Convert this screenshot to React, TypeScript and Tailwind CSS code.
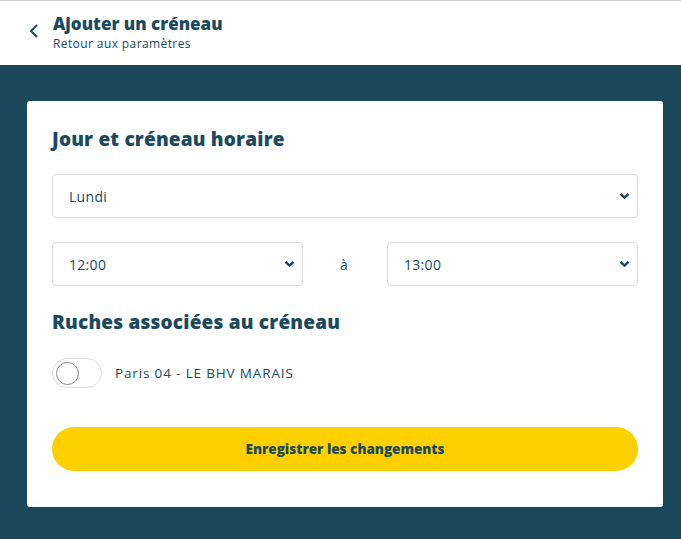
import React from "react";

const Chevron = () => (
  <svg width="11" height="8" viewBox="0 0 11 8" className="absolute right-[3px] top-1/2 -translate-y-1/2 pointer-events-none">
    <path d="M1.5 1.8 L5.5 5.6 L9.5 1.8" fill="none" stroke="#1b4a5e" strokeWidth="2.4" />
  </svg>
);

function Select({ value, className }: { value: string; className?: string }) {
  return (
    <div className={"relative h-[44px] rounded-[4px] border border-[#dcdcdc] bg-white flex items-center pl-[16px] pr-[12px] " + (className ?? "")}>
      <span className="text-[14px] text-[#1b4a5e] tracking-[0.3px]">{value}</span>
      <div className="absolute right-[4px] top-0 bottom-0 w-[16px]">
        <Chevron />
      </div>
    </div>
  );
}

export default function App() {
  return (
    <div className="w-[681px] h-[539px] bg-[#1b475b] flex flex-col" style={{ fontFamily: '"Open Sans", "Noto Sans", sans-serif' }}>
      <div className="h-[65px] bg-white border-t border-[#d0d0d0] flex items-start">
        <div className="pl-[28px] pt-[22px]">
          <svg width="12" height="16" viewBox="0 0 12 16">
            <path d="M9 2 L3 8 L9 14" fill="none" stroke="#1b4a5e" strokeWidth="2" />
          </svg>
        </div>
        <div className="pl-[13px] pt-[12px] flex flex-col">
          <span className="text-[17px] leading-[22px] font-extrabold text-[#1b4a5e]">Ajouter un créneau</span>
          <span className="text-[12px] leading-[16px] text-[#1b4a5e] mt-[1px] tracking-[0.4px]">Retour aux paramètres</span>
        </div>
      </div>
      <div className="pl-[27px] pr-[18px] pt-[36px]">
        <div className="bg-white rounded-[3px] h-[406px] px-[25px] pt-[26px]">
          <h2 className="text-[19px] leading-[24px] font-extrabold text-[#1b4a5e] tracking-[0.2px]">Jour et créneau horaire</h2>
          <Select value="Lundi" className="mt-[23px]" />
          <div className="mt-[24px] flex items-center">
            <Select value="12:00" className="w-[251px]" />
            <div className="flex-1 text-center text-[14px] text-[#1b4a5e] pr-[2px]">à</div>
            <Select value="13:00" className="w-[251px]" />
          </div>
          <h2 className="mt-[24px] text-[19px] leading-[24px] font-extrabold text-[#1b4a5e] tracking-[0.2px]">Ruches associées au créneau</h2>
          <div className="mt-[24px] flex items-center">
            <div className="w-[50px] h-[30px] rounded-full border border-[#dedede] bg-white flex items-center pl-[3px]">
              <div className="w-[23px] h-[23px] rounded-full border border-[#8a8a8a] bg-white" />
            </div>
            <span className="ml-[13px] text-[13.5px] text-[#1b4a5e] tracking-[0.85px]">Paris 04 - LE BHV MARAIS</span>
          </div>
          <button className="mt-[39px] w-full h-[44px] rounded-full bg-[#ffd000] text-[13.5px] font-extrabold text-[#1b4a5e]">
            Enregistrer les changements
          </button>
        </div>
      </div>
    </div>
  );
}
